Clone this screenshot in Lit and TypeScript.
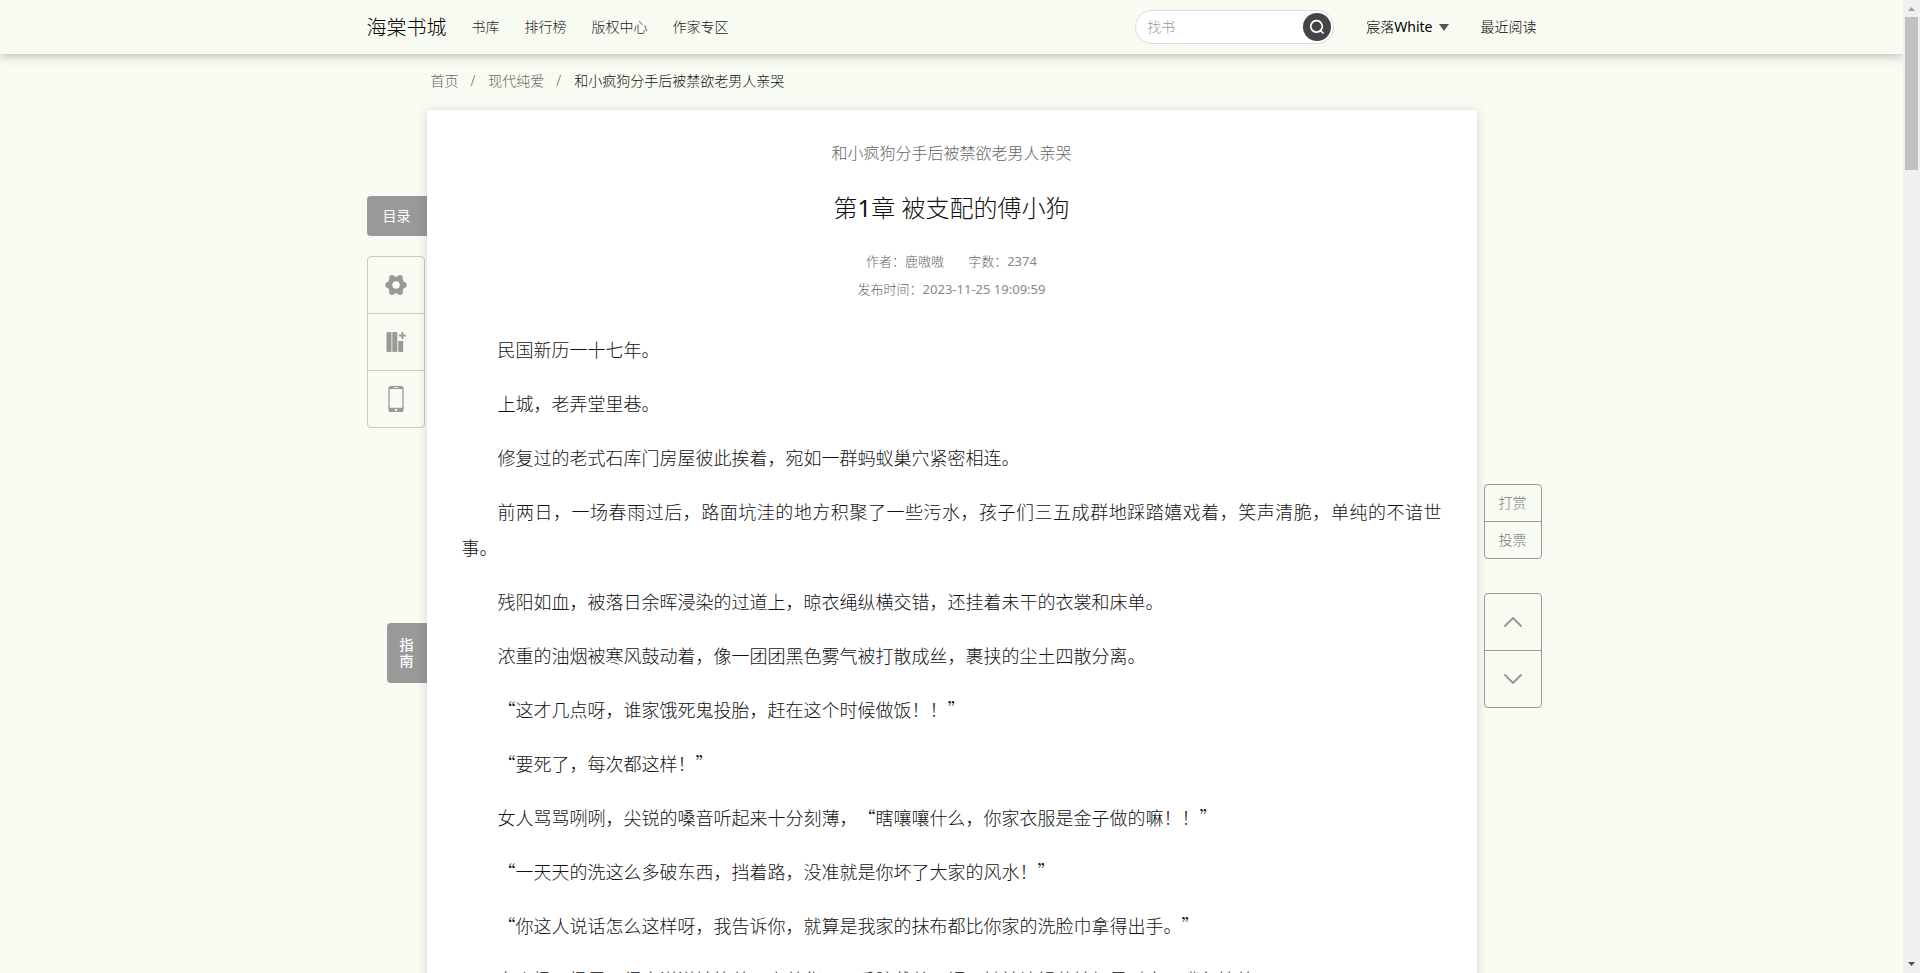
import { LitElement, html, css, svg } from "lit";
import { customElement } from "lit/decorators.js";

const navLinks = ["书库", "排行榜", "版权中心", "作家专区"];

const paragraphs = [
  "民国新历一十七年。",
  "上城，老弄堂里巷。",
  "修复过的老式石库门房屋彼此挨着，宛如一群蚂蚁巢穴紧密相连。",
  "前两日，一场春雨过后，路面坑洼的地方积聚了一些污水，孩子们三五成群地踩踏嬉戏着，笑声清脆，单纯的不谙世事。",
  "残阳如血，被落日余晖浸染的过道上，晾衣绳纵横交错，还挂着未干的衣裳和床单。",
  "浓重的油烟被寒风鼓动着，像一团团黑色雾气被打散成丝，裹挟的尘土四散分离。",
  "“这才几点呀，谁家饿死鬼投胎，赶在这个时候做饭！！”",
  "“要死了，每次都这样！”",
  "女人骂骂咧咧，尖锐的嗓音听起来十分刻薄，“瞎嚷嚷什么，你家衣服是金子做的嘛！！”",
  "“一天天的洗这么多破东西，挡着路，没准就是你坏了大家的风水！”",
  "“你这人说话怎么这样呀，我告诉你，就算是我家的抹布都比你家的洗脸巾拿得出手。”",
  "女人扬了扬眉，得意洋洋地笑着，衣着华丽，手腕戴着玉镯，她神情轻蔑地打量对方，嘴角挂着。",
];

const gearIcon = svg`<svg viewBox="0 0 22 22" width="22" height="22" aria-hidden="true">
  <circle cx="11" cy="11" r="6.2" fill="none" stroke="#999" stroke-width="4.8"/>
  <g fill="#999"><circle cx="7" cy="4" r="2.9"/><circle cx="15" cy="4" r="2.9"/><circle cx="3.1" cy="11" r="2.9"/><circle cx="18.900" cy="11" r="2.9"/><circle cx="7" cy="18" r="2.9"/><circle cx="15" cy="18" r="2.9"/></g>
</svg>`;

const shelfIcon = svg`<svg viewBox="0 0 22 22" width="22" height="22" aria-hidden="true">
  <g fill="#999"><rect x="1.5" y="1" width="5" height="20" rx="1"/><rect x="7.3" y="1" width="5" height="20" rx="1"/><rect x="13.2" y="10" width="5" height="11" rx="1"/>
  <path d="M16.4 1h1.8v2.6h2.6v1.8h-2.6V8h-1.8V5.4h-2.6V3.6h2.6z"/></g>
</svg>`;

const phoneIcon = svg`<svg viewBox="0 0 16 26" width="16" height="26" aria-hidden="true">
  <path fill="#999" fill-rule="evenodd" d="M3 0h10a2.6 2.6 0 0 1 2.6 2.6v20.8A2.6 2.6 0 0 1 13 26H3A2.6 2.6 0 0 1 .4 23.400V2.600A2.600 2.600 0 0 1 3 0zM1.700 3v18.800h12.600V3zM5.500 1.200v.8h5v-.8zM8 22.700a1.200 1.200 0 1 0 .01 0z"/>
</svg>`;

const chevron = (d: string) => svg`<svg viewBox="0 0 20 12" width="20" height="12" aria-hidden="true">
  <path fill="none" stroke="#999" stroke-width="2" stroke-linecap="round" stroke-linejoin="round" d=${d}/>
</svg>`;

@customElement("app-root")
export class AppRoot extends LitElement {
  static styles = css`
    :host {
      display: flex;
      height: 100vh;
      overflow: hidden;
      background: #f8fbf2;
      color: #111;
      font-family: "Noto Sans", "Noto Sans CJK SC", sans-serif;
      font-weight: 300;
      font-size: 14px;
      line-height: 20px;
      text-spacing-trim: space-all;
    }
    * { box-sizing: border-box; }
    a { color: inherit; text-decoration: none; }
    button {
      font: inherit;
      color: inherit;
      background: none;
      border: 0;
      padding: 0;
      margin: 0;
      cursor: pointer;
    }
    .latin { font-weight: 400; }
    .page { flex: 1; min-width: 0; overflow: hidden; }
    .topbar {
      position: relative;
      background: #f8fbf2;
      box-shadow: 0 2px 10px rgba(0, 0, 0, 0.25);
    }
    .bar {
      display: flex;
      align-items: center;
      max-width: 1170px;
      height: 54px;
      margin: 0 auto;
    }
    .brand { font-size: 20px; line-height: 28px; color: #000; margin-right: 25px; padding-top: 2px; }
    .nav { display: flex; gap: 25px; color: #222; }
    .search {
      display: flex;
      align-items: center;
      width: 199px;
      height: 34px;
      margin-left: auto;
      padding: 0 2px 0 11px;
      border: 1px solid #ddd;
      border-radius: 17px;
      background: #fff;
    }
    .search input {
      flex: 1;
      min-width: 0;
      border: 0;
      padding: 0;
      outline: 0;
      background: none;
      font: inherit;
      color: #333;
    }
    .search input::placeholder { color: #999; opacity: 1; }
    .search button {
      display: grid;
      place-items: center;
      width: 28px;
      height: 28px;
      border-radius: 50%;
      background: #444;
    }
    .user { display: flex; align-items: center; margin-left: 32px; color: #000; }
    .user svg { margin-left: 6px; }
    .recent { margin-left: 32px; color: #000; }
    .crumbs {
      display: flex;
      max-width: 1050px;
      margin: 0 auto;
      padding: 17px 4px 19px;
      color: #666;
    }
    .crumbs span { margin: 0 13px 0 12px; }
    .crumbs .here { color: #111; }
    .layout { display: grid; grid-template-columns: 1fr minmax(0, 1050px) 1fr; }
    .rail { display: flex; flex-direction: column; }
    .left { align-items: flex-end; padding-top: 86px; }
    .right { align-items: flex-start; padding: 374px 0 0 7px; gap: 34px; }
    .tab { background: #999; color: #fff; font-weight: 400; border-radius: 4px 0 0 4px; }
    .catalog { width: 60px; height: 40px; }
    .guide {
      width: 40px;
      height: 60px;
      padding: 0 12px;
      margin-top: 195px;
      line-height: 16px;
      font-weight: 500;
    }
    .stack {
      display: flex;
      flex-direction: column;
      width: 58px;
      border: 1px solid #999;
      border-radius: 4px;
      color: #777;
    }
    .stack button { display: grid; place-items: center; height: 56px; }
    .stack button + button { border-top: 1px solid #999; height: 57px; }
    .stack .short { height: 36px; }
    .stack .short + .short { height: 37px; }
    .stack.tools { margin: 20px 2px 0 0; border-color: #c8cbc4; }
    .stack.tools button + button { border-color: #c8cbc4; }
    .sheet {
      background: #fff;
      padding: 31px 35px;
      box-shadow: 0 1px 10px rgba(0, 0, 0, 0.15);
    }
    .head { text-align: center; color: #666; }
    .book { display: block; font-size: 16px; line-height: 24px; }
    h1 { margin: 23px 0 19px; font-size: 24px; line-height: 40px; font-weight: 300; color: #111; }
    .meta { font-size: 13px; line-height: 28px; margin: 0; }
    .meta .latin { color: #888; }
    .count { margin-left: 24px; }
    .body {
      margin-top: 28px;
      font-family: "Noto Sans CJK SC", sans-serif;
      font-size: 18px;
      line-height: 36px;
      text-align: justify;
    }
    .body p { margin: 0 0 18px; text-indent: 2em; }
    .scroll {
      display: flex;
      flex-direction: column;
      align-items: center;
      justify-content: space-between;
      width: 17px;
      background: #f0f0f0;
    }
    .scroll div { display: flex; flex-direction: column; align-items: center; }
    .scroll svg { display: block; }
    .thumb { width: 13px; height: 153px; background: #c1c1c1; }
  `;

  render() {
    return html`
      <div class="page">
        <header class="topbar">
          <div class="bar">
            <a class="brand" href="#">海棠书城</a>
            <nav class="nav">${navLinks.map((t) => html`<a href="#">${t}</a>`)}</nav>
            <form class="search" role="search" @submit=${(e: Event) => e.preventDefault()}>
              <input type="text" placeholder="找书" aria-label="找书" />
              <button type="submit" aria-label="搜索">
                <svg viewBox="0 0 16 16" width="16" height="16" aria-hidden="true">
                  <path fill="none" stroke="#fff" stroke-width="1.7" stroke-linecap="round" d="M7.500 1.700a5.700 5.700 0 1 0 .01 0zM11.600 11.600l2.400 2.400" />
                </svg>
              </button>
            </form>
            <a class="user" href="#">宸落<span class="latin">White</span>
              <svg viewBox="0 0 10 7" width="10" height="7" aria-hidden="true"><path fill="#555" d="M0 0h10L5 7z" /></svg>
            </a>
            <a class="recent" href="#">最近阅读</a>
          </div>
        </header>
        <nav class="crumbs">
          <a href="#">首页</a><span>/</span><a href="#">现代纯爱</a><span>/</span><a class="here" href="#">和小疯狗分手后被禁欲老男人亲哭</a>
        </nav>
        <main class="layout">
          <aside class="rail left">
            <button class="tab catalog">目录</button>
            <div class="stack tools">
              <button aria-label="设置">${gearIcon}</button>
              <button aria-label="加入书架">${shelfIcon}</button>
              <button aria-label="手机阅读">${phoneIcon}</button>
            </div>
            <button class="tab guide">指南</button>
          </aside>
          <article class="sheet">
            <header class="head">
              <a class="book" href="#">和小疯狗分手后被禁欲老男人亲哭</a>
              <h1>第<span class="latin">1</span>章 被支配的傅小狗</h1>
              <p class="meta">作者：鹿嗷嗷<span class="count">字数：<span class="latin">2374</span></span></p>
              <p class="meta">发布时间：<span class="latin">2023-11-25 19:09:59</span></p>
            </header>
            <div class="body">${paragraphs.map((t) => html`<p>${t}</p>`)}</div>
          </article>
          <aside class="rail right">
            <div class="stack">
              <button class="short">打赏</button>
              <button class="short">投票</button>
            </div>
            <div class="stack">
              <button aria-label="上一章">${chevron("M2 10 10 2l8 8")}</button>
              <button aria-label="下一章">${chevron("M2 2l8 8 8-8")}</button>
            </div>
          </aside>
        </main>
      </div>
      <div class="scroll" aria-hidden="true">
        <div>
          <svg viewBox="0 0 17 17" width="17" height="17"><path fill="#a3a3a3" d="M5 11h7L8.500 7z" /></svg>
          <span class="thumb"></span>
        </div>
        <svg viewBox="0 0 17 17" width="17" height="17"><path fill="#505050" d="M5 6h7L8.500 10z" /></svg>
      </div>
    `;
  }
}
